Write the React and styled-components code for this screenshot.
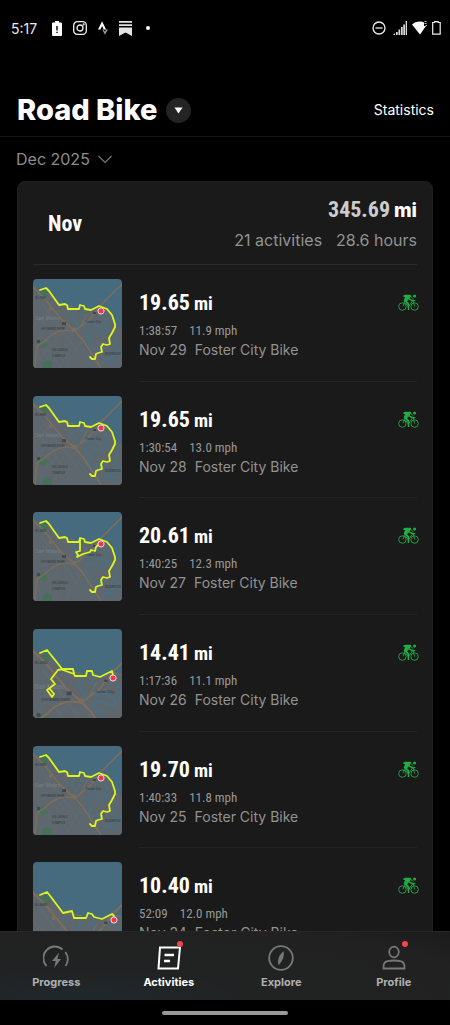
import React from 'react';
import styled, { createGlobalStyle } from 'styled-components';

const GlobalStyle = createGlobalStyle`
  * {
    box-sizing: border-box;
  }
  body {
    margin: 0;
    background: #000;
    color: #fff;
    font-family: Inter, "Liberation Sans", sans-serif;
  }
  button {
    border: 0;
    padding: 0;
    background: none;
    color: inherit;
    font: inherit;
    cursor: pointer;
  }
  a {
    color: inherit;
    text-decoration: none;
  }
  h1, h2, h3, p, ul {
    margin: 0;
    padding: 0;
  }
  svg {
    display: block;
    flex: none;
  }
`;

const narrow = '"Roboto Condensed", "Liberation Sans Narrow", Roboto, sans-serif';

const Screen = styled.div`
  display: flex;
  flex-direction: column;
  height: 100vh;
  overflow: hidden;
`;

const StatusBar = styled.div`
  display: flex;
  justify-content: space-between;
  align-items: center;
  height: 56px;
  padding: 0 9px 0 11px;
`;

const StatusGroup = styled.div`
  display: flex;
  align-items: center;
  gap: ${({ $gap }) => $gap}px;
`;

const Clock = styled.span`
  width: 30px;
  font-size: 14px;
  color: #e8e8e8;
  white-space: nowrap;
`;

const Header = styled.header`
  display: flex;
  justify-content: space-between;
  align-items: center;
  height: 81px;
  padding: 28px 16px 0 17px;
  border-bottom: 1px solid #141414;
`;

const TitleGroup = styled.div`
  display: flex;
  align-items: center;
  gap: 9px;
`;

const Title = styled.h1`
  font-size: 29px;
  line-height: 36px;
  font-weight: 800;
`;

const RoundButton = styled.button`
  display: flex;
  align-items: center;
  justify-content: center;
  width: 25px;
  height: 25px;
  border-radius: 50%;
  background: #242424;
`;

const StatsLink = styled.a`
  font-size: 14px;
  line-height: 20px;
`;

const MonthButton = styled.button`
  display: flex;
  align-items: center;
  align-self: flex-start;
  gap: 8px;
  height: 44px;
  padding: 0 16px;
  font-size: 16px;
  color: #8c8c8c;
`;

const List = styled.main`
  flex: 1;
  min-height: 0;
  overflow: hidden;
  padding: 0 17px;
`;

const Card = styled.section`
  padding: 0 15px;
  border: 1px solid #202020;
  border-radius: 8px;
  background: #1a1a1a;
`;

const Summary = styled.div`
  display: flex;
  justify-content: space-between;
  align-items: center;
  height: 83px;
  padding-left: 15px;
  border-bottom: 1px solid #2a2a2a;
`;

const Month = styled.h2`
  font-family: ${narrow};
  font-size: 22px;
  font-weight: 700;
`;

const Totals = styled.div`
  text-align: right;
  padding-top: 3px;
`;

const TotalMiles = styled.p`
  font-family: ${narrow};
  font-size: 22px;
  line-height: 30px;
  font-weight: 700;
  color: #ccc;
`;

const MilesUnit = styled.span`
  margin-left: 4px;
  font-family: Inter, sans-serif;
  font-size: 19px;
  font-weight: 800;
  color: #fff;
`;

const TotalLine = styled.p`
  display: flex;
  gap: 14px;
  font-size: 16px;
  line-height: 28px;
  color: #929292;
`;

const Rows = styled.ul`
  display: grid;
  grid-auto-rows: 1fr;
  height: 700px;
  list-style: none;
`;

const Row = styled.li`
  display: flex;
  gap: 17px;
`;

const Thumb = styled.svg`
  width: 89px;
  height: 89px;
  margin-top: 14px;
  border-radius: 4px;
`;

const Details = styled.a`
  flex: 1;
  display: flex;
  justify-content: space-between;
  padding-top: 22px;
  border-bottom: 1px solid #242424;
`;

const Distance = styled.h3`
  font-family: ${narrow};
  font-size: 22px;
  line-height: 32px;
  font-weight: 700;
`;

const Unit = styled.span`
  margin-left: 4px;
  font-size: 19px;
`;

const Pace = styled.p`
  display: flex;
  gap: 12px;
  font-family: ${narrow};
  font-size: 13px;
  line-height: 22px;
  color: #989898;
`;

const Name = styled.p`
  display: flex;
  gap: 8px;
  font-size: 14px;
  line-height: 16px;
  color: #929292;
`;

const BikeIcon = styled.svg`
  width: 21px;
  height: 17px;
  margin: 7px -2px 0 0;
`;

const TabBar = styled.nav`
  display: grid;
  grid-template-columns: repeat(4, 1fr);
  height: 69px;
  border-top: 1px solid #272727;
  background: radial-gradient(ellipse at 18% 100%, #20282c, #212222 35%, #212121 80%, #1b1b1b);
`;

const Tab = styled.a`
  display: flex;
  flex-direction: column;
  align-items: center;
  gap: 4px;
  padding-top: 13px;
  font-size: 11px;
  line-height: 14px;
  font-weight: 700;
  color: ${({ $active }) => ($active ? '#fff' : '#b0b0b0')};
`;

const TabIcon = styled.span`
  position: relative;
  color: ${({ $active }) => ($active ? '#fff' : '#777')};
`;

const Badge = styled.span`
  position: absolute;
  top: -4px;
  right: -1px;
  width: 6px;
  height: 6px;
  border-radius: 50%;
  background: #f0474d;
`;

const GestureBar = styled.div`
  display: flex;
  justify-content: center;
  align-items: center;
  height: 25px;
`;

const Pill = styled.div`
  width: 28%;
  height: 4px;
  border-radius: 2px;
  background: #999;
`;

const shore = '7,11 13,9 16,12 26,26 32,25 34,26 35,30 46,30 47,26 51,27 52,30 58,31 66,27';
const lagoon = `${shore} 74,30 79,36 82,45 82,48 79,54 76,59 77,65 74,66 70,65 68,68 69,73 65,74 63,75 62,80 59,80 57,78`;

const far = { scale: 1, x: 0, y: 0 };

const activities = [
  { id: 29, miles: '19.65', time: '1:38:57', speed: '11.9 mph', view: far, routes: [lagoon], end: [68, 32] },
  { id: 28, miles: '19.65', time: '1:30:54', speed: '13.0 mph', view: far, routes: [lagoon], end: [68, 32] },
  {
    id: 27,
    miles: '20.61',
    time: '1:40:25',
    speed: '12.3 mph',
    view: far,
    routes: [lagoon, '47,27 47,39 43,40 45,43 44,45 50,42 57,40 58,38 62,39 63,35 67,31'],
    end: [68, 32],
  },
  {
    id: 26,
    miles: '14.41',
    time: '1:17:36',
    speed: '11.1 mph',
    view: { scale: 1.2, x: -1, y: 11 },
    routes: [
      '7,24 14,21 18,26 30,41 41,45 42,47 53,47 54,42 59,42 60,46 67,48 79,42 80,46',
      '41,45 40,40 30,40 25,41 18,50 22,55 14,61 19,68 21,65 17,60',
    ],
    end: [80, 49],
  },
  { id: 25, miles: '19.70', time: '1:40:33', speed: '11.8 mph', view: far, routes: [lagoon], end: [68, 32] },
  {
    id: 24,
    miles: '10.40',
    time: '52:09',
    speed: '12.0 mph',
    view: { scale: 1.2, x: -1, y: 20 },
    routes: ['7,33 14,30 18,35 30,51 39,49 41,56 53,56 55,51 59,52 61,55 69,57 79,52 81,54'],
    end: [81, 58],
  },
];

const places = [
  { name: 'ISLAND', x: 2, y: 20 },
  { name: 'San Mateo', x: 2, y: 41, big: true },
  { name: 'Foster City', x: 53, y: 44 },
  { name: 'HAYWARD PARK', x: 8, y: 51 },
  { name: 'HILLSDALE', x: 19, y: 72 },
  { name: 'CAMPUS', x: 19, y: 78 },
  { name: 'REDWOOD', x: 72, y: 76 },
  { name: 'SHORES', x: 74, y: 80 },
];

// labels are only drawn where the whole word is inside the thumbnail
const BaseMap = ({ view }) => (
  <g fill="none">
    <path d="M-5 8L8 10L16 13L26 26L34 25L36 31L46 29L58 31L68 27L76 31L83 45L89 50L95 95H-10V8Z" fill="#5d676d" />
    <g stroke="#68727a" strokeWidth="0.4">
      <path d="M0 30L30 70M8 24L45 72M0 50L28 89M18 30L0 48M25 37L4 60M34 50L10 75M40 60L20 84M4 18L36 60M48 62L32 89M0 70L14 89" />
    </g>
    <path d="M6 14Q9 10 14 11L15 17L8 18ZM4 64L9 61L15 66L10 70ZM10 83Q14 80 19 83V89H9Z" fill="#477058" />
    <g stroke="#467288" strokeWidth="1.6" strokeLinecap="round">
      <path d="M42 34Q36 37 42 42Q47 46 42 50M47 35Q53 33 52 40Q46 44 54 46Q61 42 65 47Q71 48 69 54Q63 55 58 51Q51 51 53 58Q60 57 58 63Q52 66 61 70Q67 69 72 74M70 37Q77 43 72 48L78 53M75 82Q79 74 87 77M70 84L76 79L83 85M82 55Q85 61 80 68Q84 73 89 70" />
      <path d="M49 61L55 68L50 72L64 85" strokeWidth="0.8" />
    </g>
    <g stroke="#7c6d5d" strokeLinecap="round">
      <path d="M-4 4L12 20L30 42L41 51L50 61L68 89" strokeWidth="1.8" />
      <path d="M89 5L67 27L57 40L42 52L31 51Q20 53 12 62L4 67L2 89" strokeWidth="1.6" />
      <path d="M67 27L74 29M23 25L41 28M54 35L47 48" strokeWidth="1" />
    </g>
    <g fill="#7c6d5d">
      <circle cx="18" cy="30" r="2" />
      <circle cx="41" cy="51" r="2.4" />
      <circle cx="31" cy="43" r="1.4" />
    </g>
    <path d="M29 43h4v3h-4zM4 61h3v3h-3zM60 33h3v2h-3z" fill="#42484b" />
    <g fill="#343b40" fontFamily="Inter, sans-serif" fontSize="3" fontWeight="500">
      {places
        .filter((place) => place.y * view.scale + view.y < 84 - view.y && place.x * view.scale < 73)
        .map((place) => (
          <text
            key={place.name}
            x={place.x}
            y={place.y}
            fontSize={place.big ? 5 : 3}
            fill={place.big ? '#757d82' : '#343b40'}
          >
            {place.name}
          </text>
        ))}
    </g>
  </g>
);

const RouteMap = ({ view, routes, end }) => (
  <Thumb viewBox="0 0 89 89" role="img" aria-label="Route map">
    <rect width="89" height="89" fill="#476b7e" />
    <g transform={`translate(${view.x} ${view.y}) scale(${view.scale})`}>
      <BaseMap view={view} />
    </g>
    {routes.map((points) => (
      <polyline key={points} points={points} fill="none" stroke="#dcf51e" strokeWidth="1.8" strokeLinejoin="round" strokeLinecap="round" />
    ))}
    <circle cx={end[0]} cy={end[1]} r="3.1" fill="#fb3448" stroke="#e8e3e3" strokeWidth="1" />
  </Thumb>
);

const Cyclist = () => (
  <BikeIcon viewBox="0 0 62 50" aria-label="Ride" fill="none" stroke="#20ad43">
    <circle cx="13" cy="37" r="11" strokeWidth="2.6" />
    <circle cx="49" cy="37" r="11" strokeWidth="2.6" />
    <circle cx="49" cy="6" r="4.5" fill="#20ad43" stroke="none" />
    <path d="M16 4Q18 2 22 2H37Q40 4 38 7L34 13L43 17L52 18L50 21H42L31 16L27 21L33 28V47H29L28 31L19 22Q16 20 18 16L21 9H16Z" fill="#20ad43" stroke="none" />
    <path d="M36 5L45 14M20 21L15 36M43 20L31 38L21 27M45 20L49 37" strokeWidth="2.6" />
  </BikeIcon>
);

const ActivityRow = ({ activity }) => (
  <Row>
    <RouteMap view={activity.view} routes={activity.routes} end={activity.end} />
    <Details href="#">
      <div>
        <Distance>
          {activity.miles}
          <Unit>mi</Unit>
        </Distance>
        <Pace>
          <span>{activity.time}</span>
          <span>{activity.speed}</span>
        </Pace>
        <Name>
          <span>Nov {activity.id}</span>
          <span>Foster City Bike</span>
        </Name>
      </div>
      <Cyclist />
    </Details>
  </Row>
);

const StatusIcons = () => (
  <StatusBar>
    <StatusGroup $gap={11}>
      <Clock>5:17</Clock>
      <svg width="10" height="15" viewBox="0 0 10 15" fill="#fff">
        <path d="M3 0h4v1.5h2q1 0 1 1V14q0 1-1 1H1q-1 0-1-1V2.5q0-1 1-1h2z" />
        <path d="M4.3 5h1.4v4.5H4.3zM4.3 10.7h1.4v1.4H4.3z" fill="#000" />
      </svg>
      <svg width="14" height="14" viewBox="0 0 14 14" fill="none" stroke="#eee" strokeWidth="1.3">
        <rect x="0.7" y="0.7" width="12.6" height="12.6" rx="3.6" />
        <circle cx="7" cy="7" r="3" />
        <circle cx="10.7" cy="3.4" r="0.4" />
      </svg>
      <svg width="10" height="14" viewBox="0.5 0 10.5 14">
        <path d="M0.5 8.5L4.8 0L9 8.5H6.5L4.8 5L3 8.5Z" fill="#fff" />
        <path d="M5 8.5H6.5L7.7 11L9 8.5H11L7.7 14Z" fill="#999" />
      </svg>
      <svg width="13" height="15" viewBox="0 0 13 15" fill="#e4e4e4">
        <path d="M0 0h13v1.7H0zM0 3.2h13v1.7H0zM0 6.5h13V15L6.5 11.5L0 15z" />
      </svg>
      <svg width="10" height="14" viewBox="0 0 10 14" fill="#fff">
        <circle cx="5" cy="7" r="2" />
      </svg>
    </StatusGroup>
    <StatusGroup $gap={5}>
      <svg width="16" height="14" viewBox="0 0 16 14" fill="none" stroke="#eee" strokeWidth="1.3">
        <circle cx="7" cy="7" r="6" />
        <path d="M3.5 7h7" />
      </svg>
      <svg width="14" height="14" viewBox="0 0 14 14" fill="#ddd">
        <path d="M0 14L2 12V14zM3 11h1.7v3H3zM5.5 8.5h1.7V14H5.5zM8 6h1.7v8H8zM10.3 3.5H12V14h-1.7zM12.7 0H14v14h-1.3z" />
      </svg>
      <svg width="15" height="14" viewBox="0 0 15 14" fill="#fff">
        <path d="M0 3.5Q3 .5 8 .5Q11 .5 12 1.5V5H14L8 13.5Z" />
        <path d="M12.5 0.5h2M12.5 2.5h2M13.5 4.5h1.5" stroke="#bbb" />
      </svg>
      <svg width="9" height="14" viewBox="0 0 9 14" fill="none" stroke="#eee" strokeWidth="1.2">
        <path d="M2.7 1.5V0.6h3.4v0.9H8.2v11.7H0.7V1.5z" />
      </svg>
    </StatusGroup>
  </StatusBar>
);

const tabs = [
  {
    label: 'Progress',
    icon: (
      <g strokeWidth="1.9">
        <path d="M3.5 21A11.5 11.5 0 0 1 19.5 4.5M22.3 7A11.5 11.5 0 0 1 22.5 21" />
        <path d="M16 7.5L9 16H12.700L11.200 23L18 14H14.500Z" fill="currentColor" stroke="none" />
      </g>
    ),
  },
  {
    label: 'Activities',
    active: true,
    badge: true,
    icon: (
      <g strokeWidth="2">
        <path d="M4 2.5H24L22 23.5H2.500Z" />
        <path d="M8.5 10H18M8 16H14" strokeWidth="2.6" />
      </g>
    ),
  },
  {
    label: 'Explore',
    icon: (
      <g strokeWidth="1.8">
        <circle cx="13" cy="13" r="11.800" />
        <path d="M15.5 6Q17.5 12 10.7 20.5Q8 13 15.5 6Z" fill="currentColor" stroke="none" />
      </g>
    ),
  },
  {
    label: 'Profile',
    badge: true,
    icon: (
      <g strokeWidth="1.8">
        <ellipse cx="13" cy="7" rx="4.8" ry="5.3" />
        <path d="M2.5 23.5Q2 17 6.5 16.2Q13 14.8 19.5 16.2Q24 17 23.5 23.5Z" />
      </g>
    ),
  },
];

const App = () => {
  return (
    <Screen>
      <GlobalStyle />
      <StatusIcons />
      <Header>
        <TitleGroup>
          <Title>Road Bike</Title>
          <RoundButton aria-label="Choose sport">
            <svg width="9" height="7" viewBox="0 0 9 7" fill="#fff">
              <path d="M0.5 0.5H8.5L4.5 6.5Z" />
            </svg>
          </RoundButton>
        </TitleGroup>
        <StatsLink href="#">Statistics</StatsLink>
      </Header>
      <MonthButton>
        Dec 2025
        <svg width="14" height="9" viewBox="0 0 14 9" fill="none" stroke="#777" strokeWidth="1.2">
          <path d="M0.5 1L7 7.5L13.5 1" />
        </svg>
      </MonthButton>
      <List>
        <Card>
          <Summary>
            <Month>Nov</Month>
            <Totals>
              <TotalMiles>
                345.69
                <MilesUnit>mi</MilesUnit>
              </TotalMiles>
              <TotalLine>
                <span>21 activities</span>
                <span>28.6 hours</span>
              </TotalLine>
            </Totals>
          </Summary>
          <Rows>
            {activities.map((activity) => (
              <ActivityRow key={activity.id} activity={activity} />
            ))}
          </Rows>
        </Card>
      </List>
      <TabBar>
        {tabs.map(({ label, icon, active, badge }) => (
          <Tab key={label} href="#" $active={active}>
            <TabIcon $active={active}>
              <svg width="26" height="26" viewBox="0 0 26 26" fill="none" stroke="currentColor">
                {icon}
              </svg>
              {badge && <Badge />}
            </TabIcon>
            {label}
          </Tab>
        ))}
      </TabBar>
      <GestureBar>
        <Pill />
      </GestureBar>
    </Screen>
  );
};

export default App;
